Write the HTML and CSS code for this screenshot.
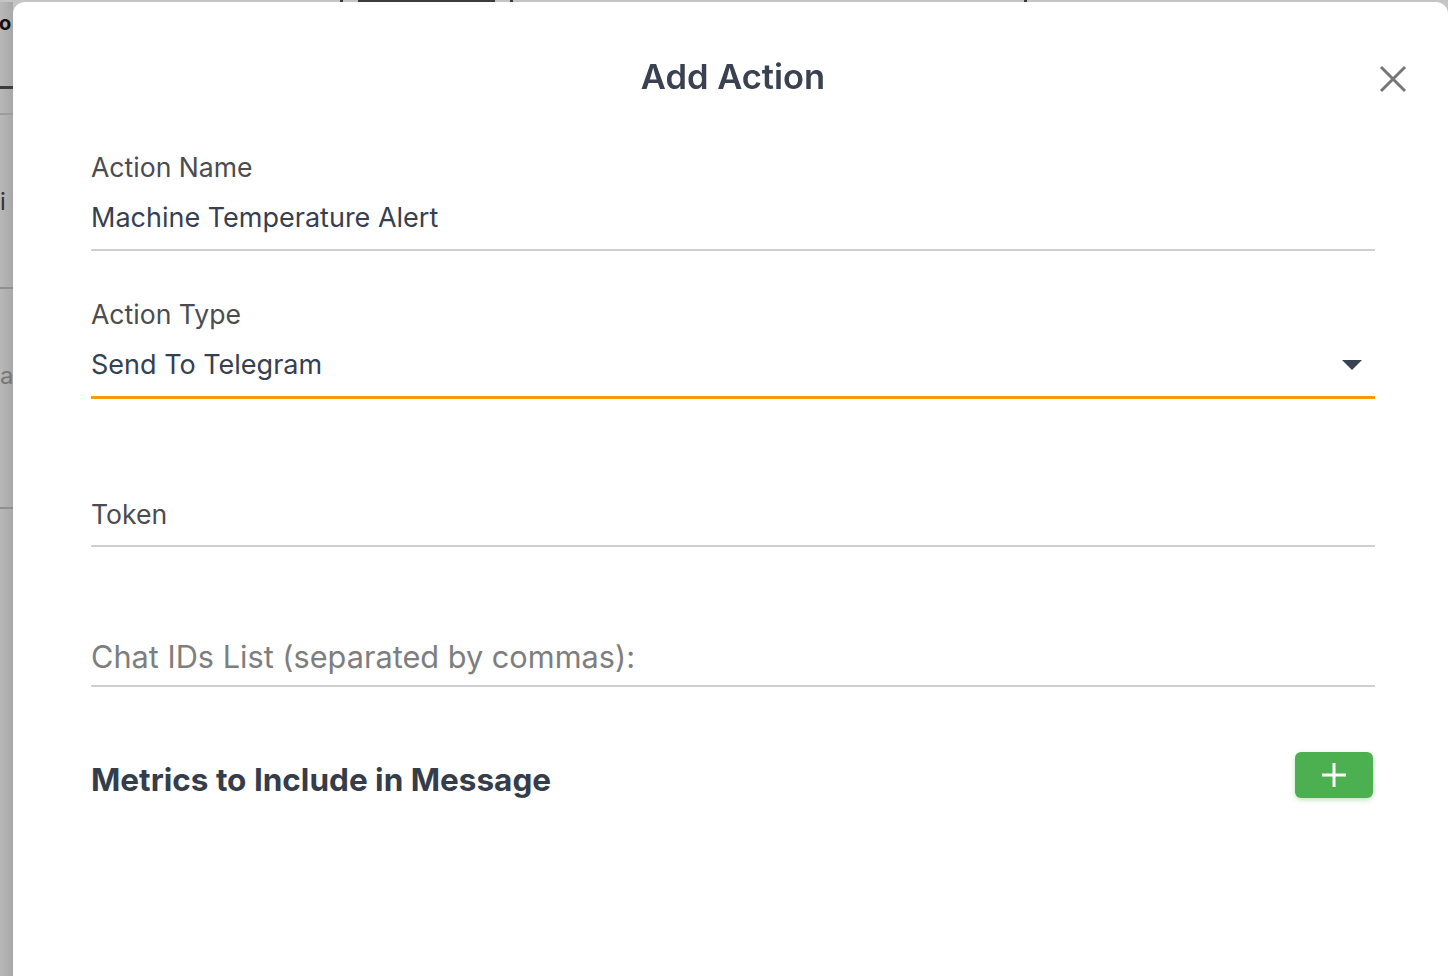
FILE: index.html
```html
<!DOCTYPE html>
<html lang="en">
<head>
<meta charset="utf-8">
<title>Add Action</title>
<link rel="stylesheet" href="styles.css">
</head>
<body>
<div class="page">
  <div class="topstrip">
    <span class="seg seg-a"></span>
    <span class="tick"></span>
    <span class="seg seg-b"></span>
    <span class="seg seg-dark"></span>
    <span class="seg seg-c"></span>
    <span class="tick"></span>
    <span class="seg seg-d"></span>
    <span class="tick"></span>
    <span class="seg seg-e"></span>
  </div>
  <div class="sidestrip">
    <div class="frag frag-o"><span>o</span></div>
    <div class="rule rule-dark"></div>
    <div class="rule rule-1"></div>
    <div class="frag frag-i"><span>i</span></div>
    <div class="rule rule-2"></div>
    <div class="frag frag-a"><span>a</span></div>
    <div class="rule rule-3"></div>
  </div>
</div>

<div class="modal">
  <header class="modal-header">
    <h1 class="modal-title">Add Action</h1>
    <button class="close-btn" type="button" aria-label="Close">
      <svg width="28" height="28" viewBox="0 0 28 28"><path d="M2 2 L26 26 M26 2 L2 26" stroke="#767676" stroke-width="3" stroke-linecap="butt" fill="none"/></svg>
    </button>
  </header>

  <div class="field field-name">
    <div class="label">Action Name</div>
    <div class="value-line">
      <span class="value">Machine Temperature Alert</span>
    </div>
  </div>

  <div class="field field-type">
    <div class="label">Action Type</div>
    <div class="value-line select-line">
      <span class="value">Send To Telegram</span>
      <svg class="caret" width="20" height="10" viewBox="0 0 20 10"><path d="M0 0 L20 0 L10 10 Z" fill="#3a4150"/></svg>
    </div>
  </div>

  <div class="field field-token">
    <div class="value-line token-line">
      <span class="token-label">Token</span>
    </div>
  </div>

  <div class="field field-chat">
    <div class="value-line chat-line">
      <span class="placeholder">Chat IDs List (separated by commas):</span>
    </div>
  </div>

  <div class="metrics-row">
    <h2 class="metrics-title">Metrics to Include in Message</h2>
    <button class="add-btn" type="button" aria-label="Add metric">
      <svg width="26" height="26" viewBox="0 0 26 26"><path d="M13 1 V25 M1 13 H25" stroke="#ffffff" stroke-width="3" fill="none"/></svg>
    </button>
  </div>
</div>
</body>
</html>
```

FILE: styles.css
```css
* { box-sizing: border-box; }

html, body {
  margin: 0;
  padding: 0;
  width: 1448px;
  height: 976px;
  overflow: hidden;
}

body {
  font-family: Inter, "Noto Sans", "Liberation Sans", sans-serif;
  background: linear-gradient(180deg, #c6c6c6 0%, #b2b2b2 40%, #a6a6a6 100%);
}

.page {
  display: flex;
  flex-direction: column;
  height: 976px;
}

.topstrip {
  display: flex;
  height: 2px;
  background: #c4c4c4;
}
.seg { height: 2px; display: block; }
.seg-a { width: 340px; }
.tick { width: 3px; background: #3a3a3a; }
.seg-b { width: 15px; }
.seg-dark { width: 137px; background: #3c3c3c; }
.seg-c { width: 15px; }
.seg-d { width: 511px; }
.seg-e { flex: 1; }

.sidestrip {
  width: 13px;
  display: flex;
  flex-direction: column;
  overflow: hidden;
  flex: 1;
  background: linear-gradient(90deg, #b8b8b8, #a8a8a8);
}

.frag {
  display: flex;
  justify-content: flex-start;
  white-space: nowrap;
  font-size: 24px;
  line-height: 30px;
}
.frag span { flex-shrink: 0; }
.frag-o { margin-top: 6px; color: #111; font-weight: 700; font-size: 20px; margin-left: -1px; }
.frag-i { margin-top: 72px; color: #333; }
.frag-a { margin-top: 72px; color: #777; }

.rule { width: 13px; flex-shrink: 0; }
.rule-dark { height: 3px; margin-top: 48px; background: #3c3c3c; }
.rule-1 { height: 2px; margin-top: 24px; background: #9c9c9c; }
.rule-2 { height: 2px; margin-top: 70px; background: #8e8e8e; }
.rule-3 { height: 2px; margin-top: 116px; background: #8e8e8e; }

/* Modal overlay */
.modal {
  position: fixed;
  left: 13px;
  top: 2px;
  right: 0;
  bottom: 0;
  background: #ffffff;
  border-radius: 12px 12px 0 0;
  padding: 0 73px 0 78px;
  display: flex;
  flex-direction: column;
}

.modal-header {
  position: relative;
  height: 150px;
  display: flex;
  align-items: center;
  justify-content: center;
}

.modal-title {
  margin: 0;
  font-size: 34.5px;
  line-height: 40px;
  font-weight: 600;
  color: #3a4150;
  letter-spacing: 0;
}

.close-btn {
  position: absolute;
  right: -32px;
  top: 63px;
  width: 28px;
  height: 28px;
  padding: 0;
  border: 0;
  background: none;
  display: block;
}
.close-btn svg { display: block; }

.field { display: flex; flex-direction: column; }

.label {
  font-size: 26.6px;
  line-height: 30px;
  color: #4a4c50;
}

.value-line {
  display: flex;
  align-items: center;
  justify-content: space-between;
  border-bottom: 2px solid #d0d0d0;
}

.value {
  font-size: 27px;
  line-height: 30px;
  color: #364050;
}

.field-name .value-line {
  margin-top: 21px;
  padding-bottom: 16px;
}

.field-type { margin-top: 48px; }
.field-type .value-line {
  margin-top: 21px;
  padding-bottom: 16px;
  border-bottom: 3px solid #f59a0c;
}
.caret { margin-right: 13px; display: block; }

.field-token { margin-top: 100px; }
.token-line { padding-bottom: 16px; }
.token-label {
  font-size: 26.6px;
  line-height: 30px;
  color: #4a4c50;
}

.field-chat { margin-top: 92px; }
.chat-line { padding-bottom: 10px; }
.placeholder {
  font-size: 30.7px;
  line-height: 36px;
  color: #7e7e7e;
}

.metrics-row {
  margin-top: 65px;
  display: flex;
  align-items: flex-start;
  justify-content: space-between;
}

.metrics-title {
  margin: 13px 0 0 0;
  font-size: 31.5px;
  line-height: 30px;
  font-weight: 700;
  color: #353c4a;
}

.add-btn {
  width: 78px;
  height: 46px;
  margin-right: 2px;
  border: 0;
  padding: 0;
  border-radius: 6px;
  background: #4caf50;
  box-shadow: 0 2px 5px rgba(76, 175, 80, 0.35);
  display: flex;
  align-items: center;
  justify-content: center;
}
.add-btn svg { display: block; }
```
